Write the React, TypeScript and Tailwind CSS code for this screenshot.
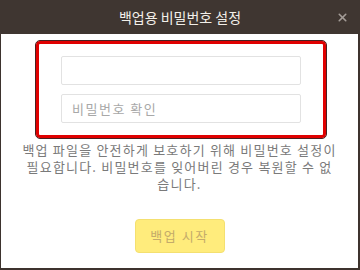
import { X } from 'lucide-react';

export default function App() {
  return (
    <div className="w-[360px] h-[270px] flex flex-col bg-white font-['Noto_Sans_CJK_KR',sans-serif] border-l border-r-2 border-b-2 border-[#3d332e]">
      {/* header */}
      <div className="relative h-[34px] shrink-0 bg-[#3f3631] flex items-center justify-center -mx-px -mr-[2px]">
        <span className="text-[14px] text-[#f2efe9]">백업용 비밀번호 설정</span>
        <X size={13} strokeWidth={3} className="absolute right-[11px] top-[11px] text-[#a39c97]" />
      </div>

      {/* password fields */}
      <div className="mt-[7px] ml-[35px] w-[290px] h-[97px] rounded-[4px] border-[3px] border-[#e00000] outline outline-1 outline-[#4a2020] flex flex-col items-center pt-[12px] gap-[9px]">
        <input
          type="password"
          className="w-[240px] h-[29px] rounded-[2px] border border-[#e2e2e2] px-[10px] text-[13px] outline-none"
        />
        <input
          type="password"
          placeholder="비밀번호 확인"
          className="w-[240px] h-[29px] rounded-[2px] border border-[#e2e2e2] px-[10px] text-[13px] tracking-[1.5px] outline-none placeholder:text-[#a8a8a8]"
        />
      </div>

      <p className="mt-[3px] px-[16px] text-center text-[13px] leading-[17px] tracking-[1.2px] text-[#7a7a7a]">
        백업 파일을 안전하게 보호하기 위해 비밀번호 설정이
        <br />
        필요합니다. 비밀번호를 잊어버린 경우 복원할 수 없
        <br />
        습니다.
      </p>

      <div className="flex justify-center mt-[27px]">
        <button className="w-[90px] h-[34px] rounded-[4px] bg-[#ffec7c] border border-[#f4e070] text-[13px] tracking-[1.5px] text-[#c4ab6a]">
          백업 시작
        </button>
      </div>
    </div>
  );
}
